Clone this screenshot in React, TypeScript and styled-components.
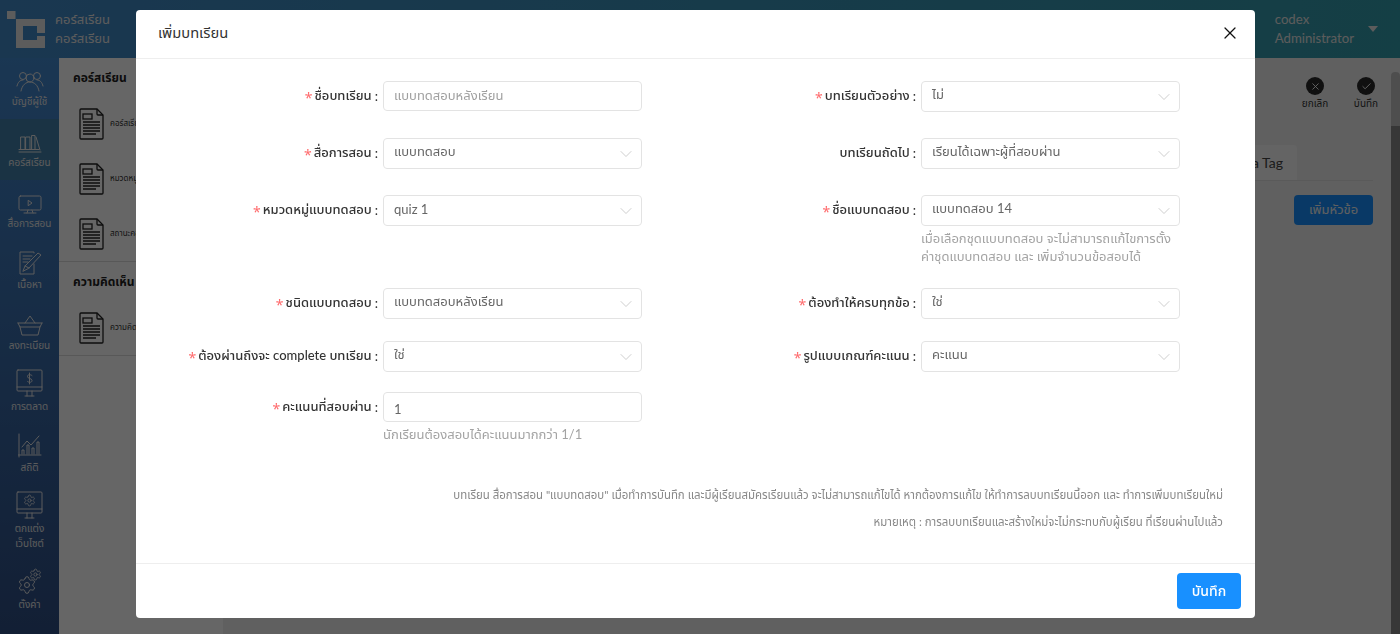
import React from "react";
import styled, { createGlobalStyle } from "styled-components";
import { Check, ChevronDown, Settings, X } from "lucide-react";

const FONT = `Lato, "Noto Sans", "Noto Sans Thai", "Liberation Sans", sans-serif`;

const Global = createGlobalStyle`
  html, body { margin: 0; padding: 0; height: 100%; overflow: hidden; }
  body { font-family: ${FONT}; background: #d6d6d6; }
  #root { height: 634px; }
  * { box-sizing: border-box; }
`;

const Page = styled.div`
  width: 1400px;
  height: 634px;
  display: flex;
  flex-direction: column;
  overflow: hidden;
`;
const TopBar = styled.header`
  height: 58px;
  flex: none;
  display: flex;
  align-items: center;
  background: linear-gradient(90deg, #4189c8 0%, #349dac 100%);
  padding: 0 22px 0 7px;
`;
const LogoBox = styled.div`
  width: 40px;
  height: 38px;
  margin-right: 8px;
  flex: none;
  margin-top: 1px;
`;
const Brand = styled.div`
  color: #e6e6e6;
  font-size: 13px;
  line-height: 19px;
`;
const UserArea = styled.div`
  margin-left: auto;
  display: flex;
  align-items: center;
  gap: 14px;
  color: #e6e6e6;
  font-size: 13.200px;
  line-height: 19px;
`;
const Caret = styled.span`
  width: 0;
  height: 0;
  border-left: 5px solid transparent;
  border-right: 5px solid transparent;
  border-top: 6px solid #e6e6e6;
`;
const Below = styled.div`
  flex: 1;
  display: flex;
  min-height: 0;
`;
const Side = styled.nav`
  width: 59px;
  flex: none;
  background: linear-gradient(180deg, #4389cf 0%, #2f4e84 100%);
`;
const SideItem = styled.div<{ $active?: boolean; $h?: number }>`
  height: ${(p) => p.$h ?? 61}px;
  display: flex;
  flex-direction: column;
  align-items: center;
  padding-top: 5px;
  color: #e6e6e6;
  font-size: 10px;
  line-height: 15px;
  background: ${(p) => (p.$active ? "#4180aa" : "transparent")};
  text-align: center;
`;
const IconSlot = styled.div`
  height: 29px;
  display: flex;
  align-items: flex-end;
  margin-bottom: 2px;
  flex: none;
`;
const SubPanel = styled.aside`
  width: 164px;
  flex: none;
  background: #ffffff;
  align-self: stretch;
`;
const SubGroup = styled.section`
  border-bottom: 1px solid #dcdcdc;
`;
const SubTitle = styled.div`
  font-size: 12px;
  line-height: 16px;
  font-weight: 700;
  color: #222;
  padding: 1px 0 0 14px;
  height: 38px;
  display: flex;
  align-items: center;
`;
const SubRow = styled.div`
  height: 55px;
  display: flex;
  align-items: center;
  gap: 6px;
  padding-left: 20px;
  font-size: 8px;
  color: #333;
  white-space: nowrap;
  overflow: hidden;
`;
const Main = styled.main`
  flex: 1;
  min-width: 0;
  display: flex;
  background: #f1f1f1;
`;
const MainInner = styled.div`
  flex: 1;
  min-width: 0;
  padding: 19px 18px 0 0;
`;
const Actions = styled.div`
  display: flex;
  justify-content: flex-end;
  gap: 21px;
  height: 68px;
  margin-right: -8px;
`;
const Action = styled.div`
  display: flex;
  flex-direction: column;
  align-items: center;
  gap: 2px;
  font-size: 10px;
  line-height: 13px;
  color: #333;
  width: 30px;
`;
const ActionDot = styled.span`
  width: 18px;
  height: 18px;
  border-radius: 50%;
  background: #2a2a2a;
  color: #fff;
  display: grid;
  place-items: center;
`;
const Tabs = styled.div`
  height: 36px;
  display: flex;
  justify-content: flex-end;
  border-bottom: 1px solid #e0e0e0;
`;
const Tab = styled.div`
  width: 120px;
  padding-right: 14px;
  background: #fafafa;
  border-radius: 4px 4px 0 0;
  display: flex;
  justify-content: flex-end;
  align-items: center;
  font-size: 14px;
  color: #444;
  margin-right: 76px;
`;
const TabTools = styled.div`
  display: flex;
  justify-content: flex-end;
  padding-top: 14px;
`;
const AddButton = styled.div`
  width: 79px;
  height: 30px;
  background: #1890ff;
  color: #f0f0f0;
  border-radius: 4px;
  font-size: 13px;
  display: grid;
  place-items: center;
`;
const Scroll = styled.div`
  width: 9px;
  flex: none;
  margin-top: 14px;
  background: linear-gradient(180deg, #c4c4c4 0, #c4c4c4 54px, #8a8a8a 54px);
  border-radius: 4px 4px 0 0;
`;
const Mask = styled.div`
  position: fixed;
  inset: 0;
  background: rgba(0, 0, 0, 0.6);
`;
const Modal = styled.div`
  position: fixed;
  left: 136px;
  top: 10px;
  width: 1119px;
  height: 608px;
  background: #fff;
  border-radius: 4px;
  display: flex;
  flex-direction: column;
`;
const ModalHead = styled.div`
  height: 49px;
  flex: none;
  border-bottom: 1px solid #eeeeee;
  display: flex;
  align-items: center;
  justify-content: space-between;
  padding: 0 15px 2px 22px;
  font-size: 14.700px;
  color: #333;
`;
const ModalBody = styled.div`
  flex: 1;
  padding: 22px 0 0 24px;
  min-height: 0;
`;
const FormGrid = styled.div`
  display: grid;
  grid-template-columns: 538px 538px;
`;
const Field = styled.div<{ $h: number }>`
  height: ${(p) => p.$h}px;
  display: grid;
  grid-template-columns: 223px 259px;
  align-content: start;
`;
const Label = styled.label`
  display: flex;
  justify-content: flex-end;
  align-items: center;
  height: 30px;
  padding-right: 5px;
  font-size: 13px;
  font-weight: 500;
  color: #333;
  white-space: nowrap;
`;
const Star = styled.span`
  color: #ff6b6d;
  font: 14px "Noto Sans", sans-serif;
  margin: 3px 2px 0 0;
`;
const Colon = styled.span`
  margin-left: 3px;
`;
const Control = styled.div<{ $h?: number }>`
  height: ${(p) => p.$h ?? 31}px;
  border: 1px solid #e3e3e3;
  border-radius: 4px;
  display: flex;
  align-items: center;
  justify-content: space-between;
  padding: 0 5px 0 10px;
  font-size: 13px;
  color: #666;
`;
const Placeholder = styled.span`
  color: #a0a0a0;
`;
const InputValue = styled.span`
  margin-top: 3px;
`;
const SelectValue = styled.span`
  margin-bottom: 4px;
`;
const Help = styled.div`
  grid-column: 2;
  font-size: 13px;
  line-height: 18px;
  color: #a3a3a3;
  padding-top: 3px;
`;
const Notes = styled.div`
  padding-right: 32px;
  text-align: right;
  font-size: 11.430px;
  line-height: 27px;
  color: #888;
`;
const ModalFoot = styled.div`
  height: 55px;
  flex: none;
  border-top: 1px solid #eeeeee;
  display: flex;
  align-items: center;
  justify-content: flex-end;
  padding: 0 14px 0 0;
`;
const Save = styled.button`
  width: 64px;
  height: 36px;
  background: #1890ff;
  color: #fff;
  border: 0;
  border-radius: 4px;
  font: 500 14px ${FONT};
`;

const ic = { fill: "none", stroke: "#e6e6e6", strokeWidth: 1, strokeLinecap: "round", strokeLinejoin: "round" } as const;

const Doc = () => (
  <svg width="25" height="32" viewBox="0 0 25 32" fill="none" stroke="#222" strokeWidth="1.300">
    <path d="M2 1h16l6 6v23a1 1 0 0 1-1 1H2a1 1 0 0 1-1-1V2a1 1 0 0 1 1-1z" />
    <path d="M18 1v5a1 1 0 0 0 1 1h5" />
    <rect x="4" y="6" width="9" height="5" />
    <path d="M4 14h17M4 17h17M4 20h17M4 23h17M4 26h13" />
  </svg>
);

const icons: Record<string, React.ReactNode> = {
  users: (
    <svg width="28" height="21" viewBox="0 0 28 21" {...ic}>
      <circle cx="14" cy="7" r="4" /><circle cx="7" cy="5" r="3.500" /><circle cx="21" cy="5" r="3.500" />
      <path d="M5 20c1-6 5-9 9-9s8 3 9 9M1 15c1-4 3-6 6-6M27 15c-1-4-3-6-6-6" />
    </svg>
  ),
  books: (
    <svg width="24" height="18" viewBox="0 0 24 18" {...ic}>
      <path d="M1 17h22M1 14.500h20M3 2h4v12.500H3zM8 2h4v12.500H8zM14 0.500h3v14h-3zM18 2l4 13" />
    </svg>
  ),
  play: (
    <svg width="24" height="19" viewBox="0 0 24 19" {...ic}>
      <rect x="1" y="1" width="22" height="14" rx="1.500" /><path d="M10.500 5.500l3.500 2.500-3.500 2.500zM6 18h12M10 15l-1 3M14 15l1 3" />
    </svg>
  ),
  edit: (
    <svg width="24" height="24" viewBox="0 0 24 24" {...ic}>
      <path d="M16 2V1H2v22h14V13" /><path d="M5 5h9M5 8h7M5 11h5M5 20l2-5L20 2l3 2-12 13zM7 15l4 2" />
    </svg>
  ),
  basket: (
    <svg width="26" height="21" viewBox="0 0 26 21" {...ic}>
      <path d="M1 8h24M1 8l2 4h20l2-4M3 12l2 8h16l2-8M8 8l5-7 5 7" />
    </svg>
  ),
  dollar: (
    <svg width="27" height="28" viewBox="0 0 27 28" {...ic}>
      <rect x="1" y="1" width="25" height="21" rx="1" /><path d="M1 18h25M9 27h9M11 22v5M16 22v5" />
      <path d="M16 6.500c-1-1-4.500-1.500-4.500 1s4.500 1.500 4.500 4-3.500 2-4.500 1M13.500 4v11" />
    </svg>
  ),
  chart: (
    <svg width="24" height="25" viewBox="0 0 24 25" {...ic}>
      <path d="M1 1v23M0 22h23" /><path d="M4 14l5-6 4 4 8-9" /><path d="M4 21v-4h2v4M9 21V12h2v9M14 21v-6h2v6M19 21V9h2v12" />
    </svg>
  ),
  gear: (
    <svg width="27" height="28" viewBox="0 0 27 28" {...ic}>
      <rect x="1" y="1" width="25" height="21" rx="1" /><path d="M1 18h25M9 27h9M11 22v5M16 22v5" />
      <Settings x={7} y={3} width={13} height={13} stroke="#e6e6e6" strokeWidth={1.500} />
    </svg>
  ),
  cogs: (
    <svg width="25" height="27" viewBox="0 0 25 27" {...ic}>
      <Settings x={0} y={7} width={20} height={20} stroke="#e6e6e6" strokeWidth={1.200} />
      <Settings x={12} y={0} width={13} height={13} stroke="#e6e6e6" strokeWidth={1.600} />
    </svg>
  ),
};

const nav: { k: string; t: React.ReactNode; active?: boolean; h?: number }[] = [
  { k: "users", t: "บัญชีผู้ใช้" },
  { k: "books", t: "คอร์สเรียน", active: true },
  { k: "play", t: "สื่อการสอน" },
  { k: "edit", t: "เนื้อหา" },
  { k: "basket", t: "ลงทะเบียน" },
  { k: "dollar", t: "การตลาด" },
  { k: "chart", t: "สถิติ" },
  { k: "gear", t: <>ตกแต่ง<br />เว็บไซต์</>, h: 76 },
  { k: "cogs", t: "ตั้งค่า" },
];

type F = { label: string; req?: boolean; value: string; ph?: boolean; input?: boolean; help?: React.ReactNode; h: number };

const fields: F[] = [
  { label: "ชื่อบทเรียน", req: true, value: "แบบทดสอบหลังเรียน", ph: true, input: true, h: 57 },
  { label: "บทเรียนตัวอย่าง", req: true, value: "ไม่", h: 57 },
  { label: "สื่อการสอน", req: true, value: "แบบทดสอบ", h: 57 },
  { label: "บทเรียนถัดไป", value: "เรียนได้เฉพาะผู้ที่สอบผ่าน", h: 57 },
  { label: "หมวดหมู่แบบทดสอบ", req: true, value: "quiz 1", h: 93 },
  {
    label: "ชื่อแบบทดสอบ", req: true, value: "แบบทดสอบ 14", h: 93,
    help: <>เมื่อเลือกชุดแบบทดสอบ จะไม่สามารถแก้ไขการตั้ง<br />ค่าชุดแบบทดสอบ และ เพิ่มจำนวนข้อสอบได้</>,
  },
  { label: "ชนิดแบบทดสอบ", req: true, value: "แบบทดสอบหลังเรียน", h: 53 },
  { label: "ต้องทำให้ครบทุกข้อ", req: true, value: "ใช่", h: 53 },
  { label: "ต้องผ่านถึงจะ complete บทเรียน", req: true, value: "ใช่", h: 51 },
  { label: "รูปแบบเกณฑ์คะแนน", req: true, value: "คะแนน", h: 51 },
  { label: "คะแนนที่สอบผ่าน", req: true, value: "1", input: true, h: 89, help: "นักเรียนต้องสอบได้คะแนนมากกว่า 1/1" },
];

export default function App() {
  return (
    <Page>
      <Global />
      <TopBar>
        <LogoBox>
          <svg width="40" height="38" viewBox="0 0 40 38">
            <path fill="#e6e6e6" d="M0 0h8.500v8H0z" />
            <path fill="#e6e6e6" d="M9 8h29v14h-8v-7H16v14h14v-4h8v12H9z" />
          </svg>
        </LogoBox>
        <Brand>คอร์สเรียน<br />คอร์สเรียน</Brand>
        <UserArea>
          <div>codex<br />Administrator</div>
          <Caret />
        </UserArea>
      </TopBar>
      <Below>
        <Side>
          {nav.map((n) => (
            <SideItem key={n.k} $active={n.active} $h={n.h}>
              <IconSlot>{icons[n.k]}</IconSlot>
              <span>{n.t}</span>
            </SideItem>
          ))}
        </Side>
        <SubPanel>
          <SubGroup>
            <SubTitle>คอร์สเรียน</SubTitle>
            <SubRow><Doc />คอร์สเรียน</SubRow>
            <SubRow><Doc />หมวดหมู่</SubRow>
            <SubRow><Doc />สถานะคอร์ส</SubRow>
          </SubGroup>
          <SubGroup>
            <SubTitle>ความคิดเห็น</SubTitle>
            <SubRow><Doc />ความคิดเห็น</SubRow>
          </SubGroup>
        </SubPanel>
        <Main>
          <MainInner>
            <Actions>
              <Action><ActionDot><X size={11} /></ActionDot>ยกเลิก</Action>
              <Action><ActionDot><Check size={11} /></ActionDot>บันทึก</Action>
            </Actions>
            <Tabs><Tab>Meta Tag</Tab></Tabs>
            <TabTools><AddButton>เพิ่มหัวข้อ</AddButton></TabTools>
          </MainInner>
          <Scroll />
        </Main>
      </Below>
      <Mask />
      <Modal>
        <ModalHead>
          เพิ่มบทเรียน
          <X size={20} color="#111" strokeWidth={1.500} />
        </ModalHead>
        <ModalBody>
          <FormGrid>
            {fields.map((f) => (
              <Field key={f.label} $h={f.h}>
                <Label>{f.req && <Star>*</Star>}{f.label}<Colon>:</Colon></Label>
                <Control $h={f.input ? 30 : 31}>
                  {f.ph ? <Placeholder>{f.value}</Placeholder> : f.input ? <InputValue>{f.value}</InputValue> : <SelectValue>{f.value}</SelectValue>}
                  {!f.input && <ChevronDown size={20} color="#c4c4c4" strokeWidth={1} />}
                </Control>
                {f.help && <Help>{f.help}</Help>}
              </Field>
            ))}
          </FormGrid>
          <Notes>
            บทเรียน สื่อการสอน "แบบทดสอบ" เมื่อทำการบันทึก และมีผู้เรียนสมัครเรียนแล้ว จะไม่สามารถแก้ไขได้ หากต้องการแก้ไข ให้ทำการลบบทเรียนนี้ออก และ ทำการเพิ่มบทเรียนใหม่
            <br />
            หมายเหตุ : การลบบทเรียนและสร้างใหม่จะไม่กระทบกับผู้เรียน ที่เรียนผ่านไปแล้ว
          </Notes>
        </ModalBody>
        <ModalFoot><Save>บันทึก</Save></ModalFoot>
      </Modal>
    </Page>
  );
}
